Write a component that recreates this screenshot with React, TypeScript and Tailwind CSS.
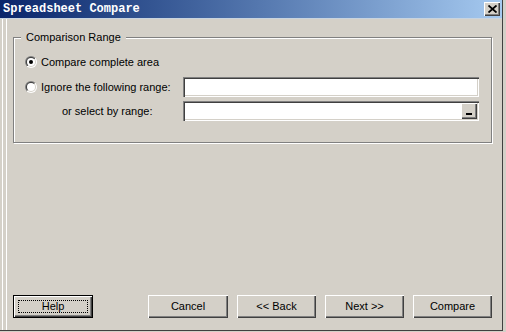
import React from 'react';

const Radio: React.FC<{ checked?: boolean }> = ({ checked }) => (
  <svg width="12" height="12" viewBox="0 0 12 12" className="shrink-0">
    <defs>
      <linearGradient id="ro" x1="0" y1="0" x2="1" y2="1">
        <stop offset="0.5" stopColor="#808080" />
        <stop offset="0.5" stopColor="#ffffff" />
      </linearGradient>
      <linearGradient id="ri" x1="0" y1="0" x2="1" y2="1">
        <stop offset="0.5" stopColor="#404040" />
        <stop offset="0.5" stopColor="#d4d0c8" />
      </linearGradient>
    </defs>
    <circle cx="6" cy="6" r="6" fill="url(#ro)" />
    <circle cx="6" cy="6" r="5" fill="url(#ri)" />
    <circle cx="6" cy="6" r="4" fill="#ffffff" />
    {checked && <circle cx="6" cy="6" r="2" fill="#000000" />}
  </svg>
);

const Button: React.FC<{ label: string; isDefault?: boolean; className?: string }> = ({ label, isDefault, className }) => (
  <div
    className={
      'h-[23px] flex items-center justify-center bg-[#d4d0c8] ' +
      (isDefault
        ? 'border border-black shadow-[inset_1px_1px_0_#fff,inset_-1px_-1px_0_#404040,inset_-2px_-2px_0_#808080] '
        : 'shadow-[inset_1px_1px_0_#fff,inset_-1px_-1px_0_#404040,inset_-2px_-2px_0_#808080] ') +
      (className || '')
    }
  >
    {isDefault ? (
      <div className="w-[calc(100%-8px)] h-[calc(100%-8px)] border border-dotted border-black flex items-center justify-center">
        {label}
      </div>
    ) : (
      label
    )}
  </div>
);

const Input: React.FC<{ withButton?: boolean }> = ({ withButton }) => (
  <div className="w-[296px] h-[20px] bg-white flex justify-end shadow-[inset_1px_1px_0_#808080,inset_2px_2px_0_#404040,inset_-1px_-1px_0_#fff,inset_-2px_-2px_0_#d4d0c8]">
    {withButton && (
      <div className="mt-[2px] mr-[2px] w-[16px] h-[16px] bg-[#d4d0c8] flex items-end justify-center pb-[4px] shadow-[inset_1px_1px_0_#fff,inset_-1px_-1px_0_#404040,inset_-2px_-2px_0_#808080]">
        <div className="w-[6px] h-[2px] bg-black" />
      </div>
    )}
  </div>
);

export default function App() {
  return (
    <div className="w-[506px] h-[332px] bg-[#d4d0c8] font-['Liberation_Sans',Arial,sans-serif] text-[11px] text-black overflow-hidden">
      <div className="w-[503px] h-[331px] border-r border-b border-[#404040] flex flex-col">
        <div className="h-[19px] flex items-center justify-between bg-gradient-to-r from-[#0a246a] to-[#a6caf0] pl-[3px] pr-[2px] border-b border-[#c8d4e0]">
          <span className="font-['Liberation_Mono',monospace] font-bold text-white text-[12px] leading-none">
            Spreadsheet Compare
          </span>
          <div className="w-[16px] h-[14px] bg-[#d4d0c8] flex items-center justify-center shadow-[inset_1px_1px_0_#fff,inset_-1px_-1px_0_#404040,inset_-2px_-2px_0_#808080]">
            <svg width="9" height="8" viewBox="0 0 9 8">
              <path d="M0.5 0.5 L8.5 7.5 M8.5 0.5 L0.5 7.5" stroke="#000" strokeWidth="1.8" />
            </svg>
          </div>
        </div>
        <div className="flex-1 flex ml-[2px] border-l border-white">
          <div className="flex-1 flex flex-col ml-[3px] border-l border-white pl-[6px] pr-[10px]">
            <div className="relative mt-[18px] h-[106px] border border-[#808080] shadow-[inset_1px_1px_0_#fff,1px_1px_0_#fff] pl-[11px] pr-[12px] pt-[17px] flex flex-col">
              <span className="absolute -top-[8px] left-[7px] bg-[#d4d0c8] px-[5px] leading-[14px]">
                Comparison Range
              </span>
              <div className="h-[14px] flex items-center gap-[4px]">
                <Radio checked />
                <span>Compare complete area</span>
              </div>
              <div className="mt-[8px] h-[20px] flex items-center">
                <div className="flex items-center gap-[4px]">
                  <Radio />
                  <span>Ignore the following range:</span>
                </div>
                <div className="ml-auto">
                  <Input />
                </div>
              </div>
              <div className="mt-[4px] h-[20px] flex items-center">
                <span className="pl-[37px]">or select by range:</span>
                <div className="ml-auto">
                  <Input withButton />
                </div>
              </div>
            </div>
            <div className="flex-1" />
            <div className="mb-[12px] flex items-center">
              <Button label="Help" isDefault className="w-[80px]" />
              <div className="ml-auto flex gap-[9px]">
                <Button label="Cancel" className="w-[80px]" />
                <Button label="<< Back" className="w-[79px]" />
                <Button label="Next >>" className="w-[79px]" />
                <Button label="Compare" className="w-[79px]" />
              </div>
            </div>
          </div>
        </div>
      </div>
    </div>
  );
}
